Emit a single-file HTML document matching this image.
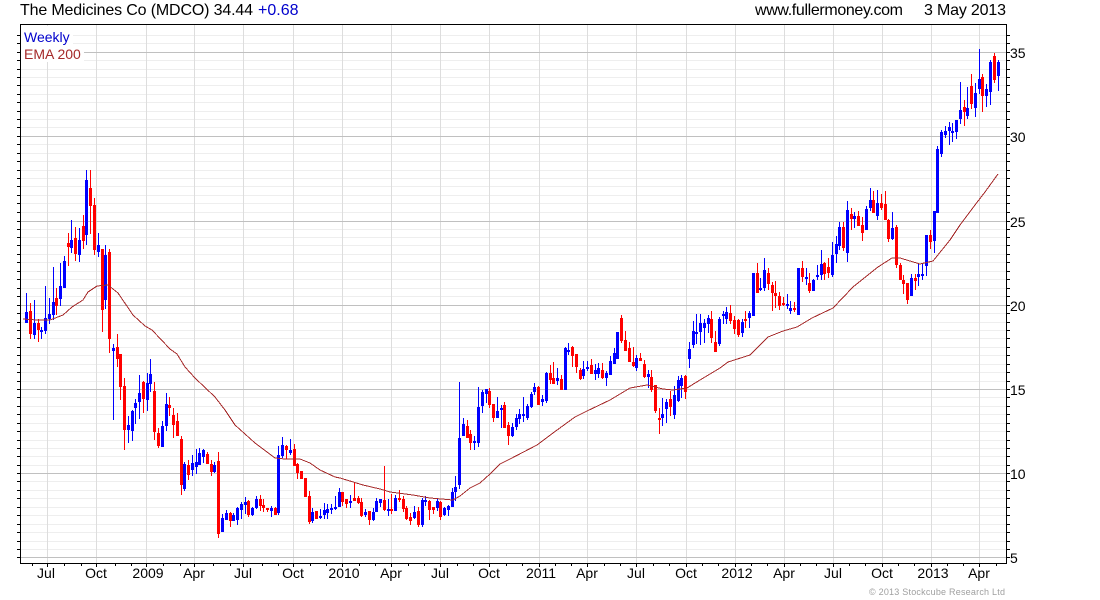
<!DOCTYPE html>
<html><head><meta charset="utf-8"><title>MDCO</title>
<style>html,body{margin:0;padding:0;background:#fff;width:1100px;height:600px;overflow:hidden}svg{display:block}text{font-family:"Liberation Sans",Arial,sans-serif;fill:#000}</style></head>
<body>
<svg width="1100" height="600" viewBox="0 0 1100 600" xmlns="http://www.w3.org/2000/svg">
<g shape-rendering="crispEdges" fill="none">
<g transform="translate(0 .5)">
<path stroke="#eee" d="M20 35h986M20 43h986M20 60h986M20 69h986M20 77h986M20 85h986M20 94h986M20 102h986M20 111h986M20 119h986M20 127h986M20 144h986M20 153h986M20 161h986M20 170h986M20 178h986M20 186h986M20 195h986M20 203h986M20 212h986M20 229h986M20 237h986M20 245h986M20 254h986M20 262h986M20 271h986M20 279h986M20 288h986M20 296h986M20 313h986M20 322h986M20 330h986M20 338h986M20 347h986M20 355h986M20 364h986M20 372h986M20 381h986M20 397h986M20 406h986M20 414h986M20 423h986M20 431h986M20 440h986M20 448h986M20 456h986M20 465h986M20 481h986M20 490h986M20 498h986M20 507h986M20 515h986M20 524h986M20 532h986M20 541h986M20 549h986"/>
</g>
<g transform="translate(.5 0)">
<path stroke="#ddd" d="M47 25V563M96 25V563M146 25V563M194 25V563M243 25V563M293 25V563M342 25V563M391 25V563M440 25V563M489 25V563M539 25V563M587 25V563M636 25V563M686 25V563M735 25V563M784 25V563M833 25V563M882 25V563M931 25V563M979 25V563"/>
</g>
<g transform="translate(0 .5)">
<path stroke="#c0c0c0" d="M20 52h986M20 136h986M20 221h986M20 305h986M20 389h986M20 473h986M20 557h986"/>
</g>
<rect x="21" y="26" width="52" height="20" fill="#fff"/>
<rect x="21" y="46" width="63" height="16" fill="#fff"/>
<g transform="translate(.5 0)" stroke="#00f">
<path stroke-width="1" d="M26 293V323M34 300V339M41 327V339M45 286V334M49 298V324M53 267V320M60 263V306M64 256V288M71 220V253M79 228V262M86 170V245M98 233V257M105 245V309M113 344V420M128 416V443M132 410V441M135 399V424M139 375V419M147 373V411M150 359V392M162 421V447M166 393V431M184 462V491M192 455V476M196 449V474M199 448V465M203 449V463M214 462V473M222 514V532M226 510V520M233 513V521M237 507V525M241 502V519M245 497V514M252 507V516M256 496V509M271 506V517M278 446V515M282 437V458M290 439V455M312 508V523M320 509V519M324 503V519M327 504V519M331 504V514M335 496V510M339 488V507M350 495V508M365 509V517M373 508V521M376 498V512M380 499V507M388 499V516M395 495V511M414 506V519M422 498V527M425 496V506M437 499V511M444 507V516M448 505V516M452 488V507M455 476V501M459 382V489M463 418V436M474 436V450M478 387V447M482 390V413M486 389V403M497 397V418M501 405V428M512 423V437M516 414V430M519 409V424M523 397V422M527 404V420M531 392V408M534 383V395M542 395V406M546 372V403M557 368V385M565 347V390M568 343V355M583 361V379M587 361V371M595 364V380M598 363V378M606 371V386M610 356V375M614 348V364M617 332V359M636 355V371M648 370V388M662 398V426M666 399V423M674 386V419M678 376V402M681 375V398M689 342V368M693 321V348M696 314V344M700 314V345M704 319V343M708 315V333M719 317V346M723 311V324M726 307V324M742 319V337M749 311V328M753 273V316M760 278V291M764 258V291M787 294V309M790 301V314M798 268V315M806 268V285M813 279V291M817 265V280M821 250V280M832 242V277M836 236V263M839 222V250M847 201V262M854 212V228M866 206V230M870 188V211M877 190V220M892 212V240M911 274V296M918 263V286M922 264V280M926 235V276M934 211V253M937 146V213M941 130V157M945 126V138M949 122V145M952 123V142M956 120V139M960 82V124M967 87V119M975 83V117M979 49V94M986 84V107M990 60V105M998 60V91"/>
<path stroke-width="3" d="M26 312V323M34 323V335M41 330V332M45 318V331M49 314V319M53 302V315M60 286V299M64 261V288M71 240V248M79 240V255M86 180V235M98 245V252M105 255V300M113 348V351M128 425V430M132 411V431M135 403V408M139 393V402M147 383V400M150 374V384M162 426V447M166 404V426M184 464V489M192 463V470M196 462V467M199 453V465M203 450V457M214 465V472M222 518V532M226 513V520M233 515V521M237 508V520M241 504V510M245 502V505M252 508V515M256 499V508M271 508V511M278 455V513M282 445V456M290 450V453M312 512V521M320 516V518M324 510V515M327 509V513M331 508V510M335 507V509M339 492V507M350 501V503M365 512V515M373 512V520M376 501V512M380 499V503M388 509V511M395 498V511M414 512V518M422 500V525M425 500V502M437 501V508M444 508V515M448 506V510M452 492V507M455 487V492M459 438V485M463 424V436M474 441V443M478 407V443M482 392V406M486 389V394M497 411V418M501 408V410M512 427V436M516 418V427M519 414V419M523 414V416M527 406V418M531 394V407M534 387V392M542 399V402M546 373V401M557 378V381M565 348V390M568 350V352M583 369V376M587 367V369M595 370V374M598 368V374M606 373V378M610 361V375M614 353V364M617 332V359M636 358V368M648 374V377M662 414V418M666 402V409M674 395V415M678 380V401M681 378V386M689 349V359M693 331V345M696 332V334M700 323V332M704 323V328M708 318V324M719 319V344M723 314V316M726 312V319M742 322V333M749 313V318M753 273V316M760 288V290M764 270V288M787 304V306M790 308V311M798 268V315M806 277V279M813 280V291M817 275V277M821 264V275M832 255V275M836 244V254M839 227V246M847 210V253M854 216V219M866 209V230M870 200V208M877 203V216M892 228V239M911 278V296M918 274V277M922 274V276M926 235V266M934 211V241M937 149V213M941 132V154M945 131V135M949 127V131M952 131V133M956 120V132M960 110V119M967 108V116M975 93V108M979 79V89M986 89V96M990 62V92M998 62V76"/>
</g>
<g transform="translate(.5 0)" stroke="#f00">
<path stroke-width="1" d="M30 303V339M38 319V342M56 288V315M68 233V266M75 227V261M83 215V249M90 170V234M94 198V255M102 249V332M109 249V353M117 334V367M120 354V400M124 378V450M143 381V413M154 382V440M158 428V448M169 397V416M173 408V438M177 413V436M181 436V495M188 460V480M207 452V464M211 460V476M218 452V538M230 512V527M248 500V517M260 495V511M263 499V512M267 508V512M275 507V515M286 445V459M294 444V466M297 463V479M301 471V479M305 478V497M309 491V524M316 511V519M342 492V506M346 499V508M354 483V501M358 496V504M361 498V517M369 511V525M384 466V511M391 494V514M399 490V502M403 496V512M406 506V520M410 513V525M418 507V527M429 500V520M433 507V514M440 501V520M467 420V438M470 430V450M489 388V408M493 404V422M504 402V428M508 422V445M538 386V405M550 365V384M553 362V384M561 375V390M572 346V367M576 354V373M580 368V380M591 359V374M602 363V379M621 315V343M625 331V351M629 342V362M633 347V367M640 353V361M644 360V378M651 370V392M655 385V413M659 408V434M670 391V416M685 375V399M711 311V343M715 331V352M730 305V324M734 316V334M738 319V337M745 311V328M757 263V293M768 268V290M772 282V311M775 281V308M779 292V310M783 297V306M794 302V312M802 261V282M809 273V293M824 262V280M828 258V278M843 222V251M851 208V230M858 211V226M862 217V241M873 191V213M881 194V210M885 191V220M888 219V242M896 225V268M900 263V280M903 275V294M907 283V304M915 274V290M930 230V249M964 100V126M971 74V109M982 74V112M994 53V83"/>
<path stroke-width="3" d="M30 311V334M38 323V330M56 298V306M68 243V247M75 238V254M83 226V241M90 188V206M94 205V250M102 249V310M109 252V339M117 347V359M120 354V387M124 386V430M143 382V399M154 391V432M158 433V446M169 405V408M173 415V425M177 421V436M181 439V485M188 465V475M207 454V464M211 464V472M218 461V534M230 513V521M248 501V515M260 499V506M263 505V508M267 508V510M275 508V515M286 446V450M294 449V466M297 464V473M301 471V479M305 478V497M309 496V522M316 511V519M342 492V502M346 499V504M354 498V501M358 498V503M361 502V516M369 511V520M384 500V510M391 509V511M399 498V500M403 499V509M406 508V519M410 517V521M418 511V525M429 501V510M433 507V510M440 502V517M467 426V438M470 434V443M489 391V405M493 404V418M504 405V428M508 425V436M538 387V405M550 373V380M553 378V384M561 379V390M572 347V356M576 354V367M580 370V379M591 365V374M602 370V378M621 318V341M625 340V351M629 348V362M633 362V366M640 358V361M644 364V377M651 377V390M655 385V411M659 418V420M670 399V407M685 376V392M711 319V338M715 342V352M730 313V321M734 320V329M738 320V335M745 319V321M757 273V293M768 273V284M772 285V293M775 293V296M779 296V306M783 303V305M794 308V310M802 268V277M809 283V291M824 263V274M828 267V273M843 227V248M851 214V219M858 216V226M862 225V233M873 200V213M881 203V208M885 204V220M888 220V239M896 227V265M900 265V280M903 280V284M907 283V300M915 278V281M930 235V242M964 107V112M971 86V104M982 77V96M994 56V80"/>
</g>
<path stroke="#a52a2a" stroke-width="1" d="M23 319L37 320L50 320L63 315L72 307L83 300L88 292L97 286L108 285L118 293L133 315L145 326L152 330L170 349L177 354L185 367L195 378L215 397L225 410L235 425L255 443L275 458L285 459L300 459L310 463L320 470L335 477L340 478L363 485L380 489L390 492L413 495L430 498L453 500L460 496L470 488L480 483L490 474L500 464L510 459L537 445L553 433L575 417L587 411L610 400L630 388L647 385L663 389L673 390L687 388L700 380L720 368L728 362L750 355L768 337L783 331L797 327L812 318L833 308L853 287L878 267L892 258L900 258L920 264L933 261L950 240L960 225L975 205L985 192L998 174"/>
<g transform="translate(0 .5)" stroke="#000">
<path d="M17 35h3M17 43h3M17 52h3M17 60h3M17 69h3M17 77h3M17 85h3M17 94h3M17 102h3M17 111h3M17 119h3M17 127h3M17 136h3M17 144h3M17 153h3M17 161h3M17 170h3M17 178h3M17 186h3M17 195h3M17 203h3M17 212h3M17 221h3M17 229h3M17 237h3M17 245h3M17 254h3M17 262h3M17 271h3M17 279h3M17 288h3M17 296h3M17 305h3M17 313h3M17 322h3M17 330h3M17 338h3M17 347h3M17 355h3M17 364h3M17 372h3M17 381h3M17 389h3M17 397h3M17 406h3M17 414h3M17 423h3M17 431h3M17 440h3M17 448h3M17 456h3M17 465h3M17 473h3M17 481h3M17 490h3M17 498h3M17 507h3M17 515h3M17 524h3M17 532h3M17 541h3M17 549h3M17 557h3"/>
<path d="M1007 35h3M1007 43h3M1007 52h3M1007 60h3M1007 69h3M1007 77h3M1007 85h3M1007 94h3M1007 102h3M1007 111h3M1007 119h3M1007 127h3M1007 136h3M1007 144h3M1007 153h3M1007 161h3M1007 170h3M1007 178h3M1007 186h3M1007 195h3M1007 203h3M1007 212h3M1007 221h3M1007 229h3M1007 237h3M1007 245h3M1007 254h3M1007 262h3M1007 271h3M1007 279h3M1007 288h3M1007 296h3M1007 305h3M1007 313h3M1007 322h3M1007 330h3M1007 338h3M1007 347h3M1007 355h3M1007 364h3M1007 372h3M1007 381h3M1007 389h3M1007 397h3M1007 406h3M1007 414h3M1007 423h3M1007 431h3M1007 440h3M1007 448h3M1007 456h3M1007 465h3M1007 473h3M1007 481h3M1007 490h3M1007 498h3M1007 507h3M1007 515h3M1007 524h3M1007 532h3M1007 541h3M1007 549h3M1007 557h3"/>
</g>
<g transform="translate(.5 0)" stroke="#000">
<path d="M32 564v2M47 564v3M64 564v2M81 564v2M96 564v3M115 564v2M131 564v2M146 564v3M163 564v2M180 564v2M194 564v3M213 564v2M230 564v2M243 564v3M262 564v2M278 564v2M293 564v3M310 564v2M326 564v2M342 564v3M359 564v2M375 564v2M391 564v3M408 564v2M424 564v2M440 564v3M457 564v2M473 564v2M489 564v3M506 564v2M522 564v2M539 564v3M555 564v2M571 564v2M587 564v3M604 564v2M620 564v2M636 564v3M653 564v2M669 564v2M686 564v3M702 564v2M718 564v2M735 564v3M751 564v2M767 564v2M784 564v3M800 564v2M816 564v2M833 564v3M849 564v2M865 564v2M882 564v3M898 564v2M914 564v2M931 564v3M947 564v2M963 564v2M979 564v3M996 564v2"/>
</g>
<path stroke="#000" d="M20.5 24.5H1006.5V563.5H20.5Z"/>
</g>
<text x="20" y="15" font-size="16" textLength="233" lengthAdjust="spacing">The Medicines Co (MDCO) 34.44</text>
<text x="258" y="15" font-size="16" style="fill:#0000cc">+0.68</text>
<text x="755" y="15" font-size="16" textLength="148" lengthAdjust="spacing">www.fullermoney.com</text>
<text x="924" y="15" font-size="16" textLength="82" lengthAdjust="spacing">3 May 2013</text>
<text x="24" y="42" font-size="14" style="fill:#0000cc">Weekly</text>
<text x="24" y="59" font-size="14" style="fill:#a52a2a">EMA 200</text>
<g font-size="14">
<text x="1010" y="58">35</text><text x="1010" y="142">30</text><text x="1010" y="227">25</text><text x="1010" y="311">20</text><text x="1010" y="395">15</text><text x="1010" y="479">10</text><text x="1010" y="563">5</text>
</g>
<g font-size="14" text-anchor="middle">
<text x="46" y="578">Jul</text><text x="96" y="578">Oct</text><text x="148" y="578">2009</text><text x="194" y="578">Apr</text><text x="243" y="578">Jul</text><text x="293" y="578">Oct</text><text x="344" y="578">2010</text><text x="391" y="578">Apr</text><text x="440" y="578">Jul</text><text x="489" y="578">Oct</text><text x="541" y="578">2011</text><text x="587" y="578">Apr</text><text x="636" y="578">Jul</text><text x="686" y="578">Oct</text><text x="737" y="578">2012</text><text x="784" y="578">Apr</text><text x="833" y="578">Jul</text><text x="882" y="578">Oct</text><text x="933" y="578">2013</text><text x="979" y="578">Apr</text>
</g>
<text x="869" y="595" font-size="9" textLength="136" lengthAdjust="spacing" style="fill:#a0a0a0">© 2013 Stockcube Research Ltd</text>
</svg>
</body></html>
